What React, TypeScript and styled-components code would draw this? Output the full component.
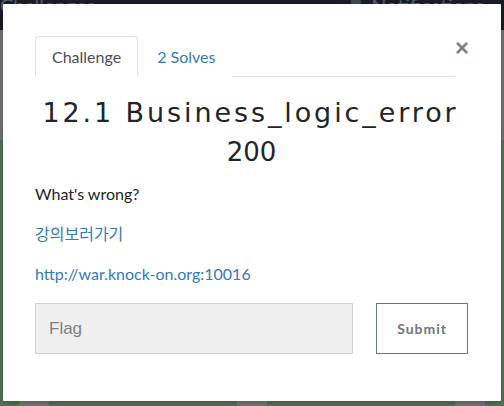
import React from "react";
import styled, { createGlobalStyle } from "styled-components";

const Global = createGlobalStyle`
  html, body { margin: 0; padding: 0; }
  body { width: 504px; height: 406px; overflow: hidden; font-family: Lato, "Noto Sans CJK KR", sans-serif; }
  * { box-sizing: border-box; }
`;

const Page = styled.div`
  position: relative;
  width: 504px;
  height: 406px;
  display: flex;
  flex-direction: column;
  background: #5a7759;
  overflow: hidden;
`;

const NavBar = styled.div`
  height: 30px;
  background: #1d1e25;
  display: flex;
  align-items: flex-start;
  justify-content: space-between;
  padding: 0 20px 0 0;
  color: #5a6070;
  font-family: Lato, sans-serif;
  font-size: 20px;
  line-height: 10px;
`;

const NavRight = styled.div`
  display: flex;
  gap: 10px;
  align-items: flex-start;
`;

const NavIcon = styled.div`
  width: 10px;
  height: 8px;
  background: #444a55;
`;

const Band = styled.div`
  height: 110px;
  background: #7a7a7a;
`;

const Field = styled.div`
  flex: 1;
  display: flex;
  align-items: flex-end;
  justify-content: space-between;
  padding: 0 19px;
`;

const Patch = styled.div`
  width: 30px;
  height: 6px;
  background: #7c7c7c;
`;

const Modal = styled.div`
  position: absolute;
  top: 4px;
  left: 3px;
  width: 498px;
  height: 397px;
  background: #fff;
  border-radius: 1px;
  box-shadow: 0 2px 8px rgba(0, 0, 0, 0.35);
  padding: 32px 33px 0 32px;
  display: flex;
  flex-direction: column;
`;

const Header = styled.div`
  display: flex;
  align-items: flex-start;
`;

const Tabs = styled.div`
  flex: 1;
  display: flex;
  border-bottom: 1px solid #dee2e6;
`;

const Tab = styled.div<{ $active?: boolean }>`
  height: 41px;
  padding: 0 16px;
  margin-bottom: -1px;
  display: flex;
  align-items: center;
  font-family: Lato, sans-serif;
  font-size: 16px;
  color: ${(p) => (p.$active ? "#495057" : "#337ab7")};
  background: #fff;
  border: 1px solid ${(p) => (p.$active ? "#dee2e6" : "transparent")};
  border-bottom-color: ${(p) => (p.$active ? "#fff" : "transparent")};
  border-radius: 4px 4px 0 0;
  padding-left: ${(p) => (p.$active ? "16px" : "18px")};
`;

const Close = styled.div`
  width: 13px;
  margin-top: 2px;
  font-family: "Liberation Sans", Arial, sans-serif;
  font-size: 24px;
  font-weight: 700;
  line-height: 20px;
  color: #000;
  opacity: 0.5;
  text-align: center;
`;

const Title = styled.h3`
  margin: 19px 2px 0 0;
  text-align: center;
  font-family: "DejaVu Sans", sans-serif;
  font-weight: 400;
  font-size: 27px;
  line-height: 34px;
  letter-spacing: 2.9px;
  color: #212529;
`;

const Value = styled.h4`
  margin: 5px 0 0;
  text-align: center;
  font-family: "DejaVu Sans", sans-serif;
  font-weight: 400;
  font-size: 26px;
  line-height: 34px;
  color: #212529;
`;

const Desc = styled.div`
  margin-top: 13px;
  font-family: Lato, "Noto Sans CJK KR", sans-serif;
  font-size: 16px;
  color: #212529;
`;

const Para = styled.p`
  margin: 0 0 16px;
  line-height: 24px;
`;

const Link = styled.a`
  color: #337ab7;
  text-decoration: none;
`;

const FormRow = styled.div`
  display: flex;
  align-items: flex-start;
  margin-top: 1px;
`;

const Input = styled.input`
  width: 319px;
  height: 51px;
  background: #efefef;
  border: 1px solid #d0d2d8;
  border-radius: 0;
  padding: 0 13px;
  font-family: "Liberation Sans", Arial, sans-serif;
  font-size: 17px;
  color: #495057;
  outline: none;
  &::placeholder { color: #808080; }
`;

const Submit = styled.button`
  margin-left: 23px;
  width: 92px;
  height: 51px;
  background: #fff;
  border: 1px solid #6c757d;
  border-radius: 0;
  font-family: Lato, sans-serif;
  font-size: 14px;
  font-weight: 700;
  letter-spacing: 1px;
  color: #6c757d;
  padding: 0;
`;

export default function App() {
  return (
    <>
      <Global />
      <Page>
        <NavBar>
          <span>Challenges</span>
          <NavRight>
            <NavIcon />
            <span>Notifications</span>
          </NavRight>
        </NavBar>
        <Band />
        <Field>
          <Patch />
          <Patch />
          <Patch />
        </Field>
        <Modal>
          <Header>
            <Tabs>
              <Tab $active>Challenge</Tab>
              <Tab>2 Solves</Tab>
            </Tabs>
            <Close>×</Close>
          </Header>
          <Title>12.1 Business_logic_error</Title>
          <Value>200</Value>
          <Desc>
            <Para>What's wrong?</Para>
            <Para>
              <Link href="#">강의보러가기</Link>
            </Para>
            <Para>
              <Link href="#">http://war.knock-on.org:10016</Link>
            </Para>
          </Desc>
          <FormRow>
            <Input placeholder="Flag" />
            <Submit>Submit</Submit>
          </FormRow>
        </Modal>
      </Page>
    </>
  );
}
